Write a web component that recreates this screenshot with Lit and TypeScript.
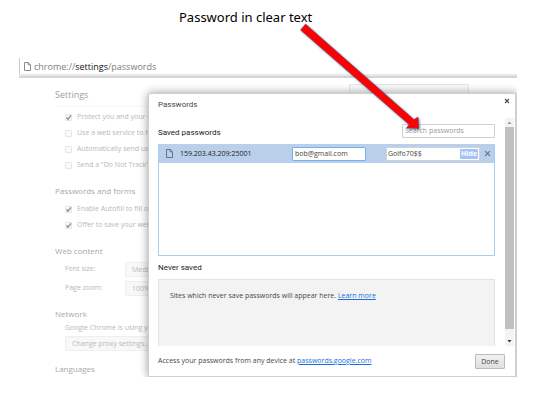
import { LitElement, html, css } from "lit";
import { customElement } from "lit/decorators.js";

const pageIcon = html`<svg class="page-icon" viewBox="0 0 7 9" aria-hidden="true">
  <path d="M.5 .5H4.2L6.5 2.8V8.5H.5Z M4.2 .5V2.8H6.5" fill="none" stroke="currentColor" stroke-width=".9" />
</svg>`;

const cross = html`<svg class="cross" viewBox="0 0 6 6" aria-hidden="true">
  <path d="M1 1L5 5M5 1L1 5" stroke="currentColor" stroke-width="1.1" />
</svg>`;

@customElement("settings-page")
export class SettingsPage extends LitElement {
  static styles = css`
    :host {
      display: block;
      color: #b8b8b8;
      font-size: 7px;
      line-height: 16px;
    }
    h1, h2 {
      margin: 0;
      font-weight: 400;
    }
    h1 {
      font-size: 9px;
      color: #a0a0a0;
    }
    h2 {
      font-size: 8px;
      color: #a8a8a8;
    }
    .head {
      display: flex;
      justify-content: space-between;
      padding-bottom: 3px;
      border-bottom: 1px solid #f7f7f7;
    }
    .find {
      appearance: none;
      width: 120px;
      height: 15px;
      margin-top: -3px;
    }
    .group {
      display: flex;
      flex-direction: column;
      padding: 2px 0 10px 10px;
    }
    .fields {
      gap: 3px;
    }
    .tight {
      gap: 2px;
      padding-top: 0;
      line-height: 12px;
    }
    label {
      display: flex;
      align-items: center;
      gap: 5px;
      white-space: nowrap;
    }
    input {
      appearance: none;
      box-sizing: border-box;
      width: 7px;
      height: 7px;
      margin: 0;
      border: 1px solid #e6e6e6;
      border-radius: 1px;
      background: #fafafa;
    }
    .check {
      display: grid;
    }
    .check > * {
      grid-area: 1 / 1;
    }
    .check svg {
      width: 7px;
      height: 7px;
      pointer-events: none;
    }
    .fields span {
      width: 55px;
    }
    select, button {
      appearance: none;
      box-sizing: border-box;
      height: 15px;
      border: 1px solid #efefef;
      border-radius: 1px;
      background: #f8f8f8;
      color: inherit;
      font: inherit;
      line-height: 13px;
      padding: 0 6px;
    }
    button {
      align-self: flex-start;
      width: 90px;
      text-align: left;
      white-space: nowrap;
    }
  `;

  private box(text: string, on: boolean) {
    return html`<label>
      <span class="check">
        <input type="checkbox" .checked=${on} />
        ${on ? html`<svg viewBox="0 0 7 7"><path d="M1.5 3.5L3 5.2L6 1.4" fill="none" stroke="#8c8c8c" stroke-width="1.3" /></svg>` : ""}
      </span>${text}</label>`;
  }

  render() {
    return html`
      <div class="head">
        <h1>Settings</h1>
        <input class="find" type="search" aria-label="Search settings" />
      </div>
      <div class="group">
        ${this.box("Protect you and your device", true)}
        ${this.box("Use a web service to help", false)}
        ${this.box("Automatically send usage", false)}
        ${this.box('Send a "Do Not Track" request', false)}
      </div>
      <h2>Passwords and forms</h2>
      <div class="group">
        ${this.box("Enable Autofill to fill out", true)}
        ${this.box("Offer to save your web", true)}
      </div>
      <h2>Web content</h2>
      <div class="group fields">
        <label><span>Font size:</span><select><option>Medium</option></select></label>
        <label><span>Page zoom:</span><select><option>100%</option></select></label>
      </div>
      <h2>Network</h2>
      <div class="group tight">
        <span>Google Chrome is using your</span>
        <button>Change proxy settings...</button>
      </div>
      <h2>Languages</h2>
    `;
  }
}

@customElement("passwords-dialog")
export class PasswordsDialog extends LitElement {
  static styles = css`
    :host {
      display: flex;
      flex-direction: column;
      box-sizing: border-box;
      border: 1px solid #cfcfcf;
      border-right-width: 2px;
      border-radius: 2px 2px 0 0;
      background: #fff;
      box-shadow: 0 0 10px rgba(0, 0, 0, 0.4);
      color: #484848;
      font-size: 7px;
      line-height: 14px;
    }
    header {
      display: flex;
      justify-content: space-between;
      box-sizing: border-box;
      height: 24px;
      padding: 4px 5px 0 9px;
      font: 8px/14px Roboto, sans-serif;
    }
    button {
      font: inherit;
      color: inherit;
      padding: 0;
      border: 0;
      background: none;
    }
    .cross {
      display: block;
      width: 6px;
      height: 6px;
    }
    .close {
      align-self: flex-start;
    }
    .scroller {
      flex: 1;
      display: flex;
      min-height: 0;
    }
    .content {
      flex: 1;
      display: flex;
      flex-direction: column;
      min-width: 0;
      padding: 6px 10px 0 9px;
    }
    .bar {
      width: 9px;
      margin-right: 1px;
      display: flex;
      flex-direction: column;
      background: #f3f3f3;
    }
    .bar svg {
      width: 9px;
      height: 9px;
    }
    .bar svg.down {
      height: 17px;
    }
    .thumb {
      flex: 1;
      background: #c1c1c1;
    }
    .top {
      display: flex;
      justify-content: space-between;
      height: 20px;
    }
    h2 {
      margin: 0;
      font: 400 8px/18px Roboto, sans-serif;
      color: #222;
    }
    input {
      box-sizing: border-box;
      min-width: 0;
      height: 14px;
      margin: 0;
      padding: 0 2px;
      border: 1px solid #d0d0d0;
      border-radius: 1px;
      background: #fff;
      color: #444;
      font: inherit;
      outline: none;
    }
    .search {
      width: 93px;
    }
    .search::placeholder {
      color: #999;
    }
    .list {
      height: 112px;
      box-sizing: border-box;
      border: 1px solid #a3d0f5;
      border-top: 0;
    }
    .row {
      display: flex;
      align-items: center;
      height: 19px;
      padding: 0 3px 0 7px;
      background: #b9cfea;
    }
    .page-icon {
      width: 7px;
      height: 9px;
      color: #667;
      margin-right: 7px;
    }
    .site {
      flex: 1;
      color: #222;
    }
    .user {
      width: 74px;
      border-color: #6db3f7;
      margin-right: 20px;
    }
    .secret {
      display: flex;
      align-items: center;
      width: 94px;
      box-sizing: border-box;
      height: 14px;
      margin-right: 4px;
      padding-right: 1px;
      border: 1px solid #ccd3dc;
      background: #fff;
    }
    .secret input {
      flex: 1;
      height: 12px;
      padding: 0 1px;
      border: 0;
    }
    .hide {
      width: 18px;
      height: 10px;
      line-height: 10px;
      border-radius: 1px;
      background: #a3c3f3;
      color: #fff;
      font-weight: 700;
    }
    .row .cross {
      color: #667891;
      width: 7px;
      height: 7px;
    }
    .never {
      margin-top: 3px;
    }
    .empty {
      flex: 1;
      margin-top: 2px;
      padding: 9px 11px;
      border: 1px solid #e2e2e2;
      border-bottom: 0;
      background: #f3f3f3;
    }
    a {
      color: #1a6fe0;
    }
    footer {
      display: flex;
      justify-content: space-between;
      align-items: center;
      height: 30px;
      padding: 0 10px 0 9px;
    }
    .done {
      width: 30px;
      height: 15px;
      line-height: 13px;
      border: 1px solid #bbb;
      border-radius: 1px;
      background: linear-gradient(#f2f2f2, #dedede);
    }
  `;

  render() {
    return html`
      <header>Passwords<button class="close" aria-label="Close">${cross}</button></header>
      <div class="scroller">
        <div class="content">
          <div class="top">
            <h2>Saved passwords</h2>
            <input class="search" type="search" placeholder="Search passwords" aria-label="Search passwords" />
          </div>
          <div class="list">
            <div class="row">
              ${pageIcon}
              <span class="site">159.203.43.209:25001</span>
              <input class="user" aria-label="User name" value="bob@gmail.com" />
              <span class="secret">
                <input aria-label="Password" value="Golfo70$$" />
                <button class="hide">Hide</button>
              </span>
              <button aria-label="Remove">${cross}</button>
            </div>
          </div>
          <h2 class="never">Never saved</h2>
          <div class="empty">Sites which never save passwords will appear here. <a href="#learn">Learn more</a></div>
        </div>
        <div class="bar" aria-hidden="true">
          <svg viewBox="0 0 9 9"><path d="M2.5 6L4.5 3.5L6.5 6Z" fill="#999" /></svg>
          <div class="thumb"></div>
          <svg class="down" viewBox="0 0 9 17"><path d="M2.5 11L4.5 13.5L6.5 11Z" fill="#333" /></svg>
        </div>
      </div>
      <footer>
        <span>Access your passwords from any device at <a href="#account">passwords.google.com</a></span>
        <button class="done">Done</button>
      </footer>
    `;
  }
}

@customElement("app-root")
export class AppRoot extends LitElement {
  static styles = css`
    :host {
      display: block;
      position: relative;
      background: #fff;
      font-family: "Open Sans", "Noto Sans", sans-serif;
    }
    .caption {
      margin: 0;
      padding: 8px 0 0 179px;
      height: 50px;
      font: 400 13px/18px "Noto Sans", sans-serif;
      color: #000;
    }
    .browser {
      margin: 0 19px;
    }
    .url {
      display: flex;
      align-items: center;
      gap: 3px;
      height: 16px;
      padding-left: 4px;
      border-left: 1px solid #ccc;
      font-size: 9px;
      color: #808080;
    }
    .edge {
      height: 2px;
      border-top: 2px solid #e8e8e8;
      background: #d4d4d4;
    }
    .url b {
      font-weight: 400;
      color: #111;
    }
    .page-icon {
      width: 7px;
      height: 9px;
    }
    .stage {
      position: relative;
      overflow: hidden;
    }
    settings-page {
      padding: 9px 48px 0 36px;
    }
    passwords-dialog {
      position: absolute;
      inset: 15px 0 0 129px;
    }
    .arrow {
      position: absolute;
      left: 296px;
      top: 20px;
      width: 130px;
      height: 112px;
      filter: drop-shadow(1px 1px 1px rgba(30, 50, 90, 0.5));
      pointer-events: none;
    }
  `;

  render() {
    return html`
      <p class="caption">Password in clear text</p>
      <main class="browser">
        <div class="url">${pageIcon}<span>chrome://<b>settings</b>/passwords</span></div>
        <div class="edge"></div>
        <div class="stage">
          <settings-page></settings-page>
          <passwords-dialog></passwords-dialog>
        </div>
      </main>
      <svg class="arrow" viewBox="296 20 130 112" aria-hidden="true">
        <path d="M305.500 24L414 119.500L418 117L419 128.500L406.500 128L409 124.500L300.500 30Z" fill="#f00" stroke="#3f5fa0" stroke-width=".6" />
      </svg>
    `;
  }
}
